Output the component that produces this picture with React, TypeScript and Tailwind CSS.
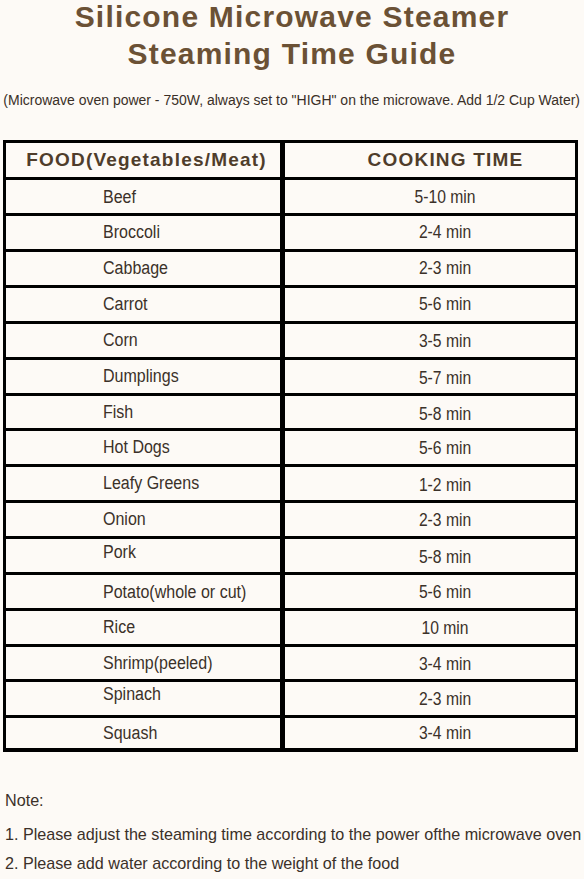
import React from "react";

const rows: [string, string, number, number][] = [
  ["Beef", "5-10 min", 1, 1],
  ["Broccoli", "2-4 min", 0, 0],
  ["Cabbage", "2-3 min", 0, 0],
  ["Carrot", "5-6 min", 0, 0],
  ["Corn", "3-5 min", 0, 1],
  ["Dumplings", "5-7 min", 0, 2],
  ["Fish", "5-8 min", 0, 2],
  ["Hot Dogs", "5-6 min", 0, 1],
  ["Leafy Greens", "1-2 min", 0, 2],
  ["Onion", "2-3 min", 0, 1],
  ["Pork", "5-8 min", -3, 2],
  ["Potato(whole or cut)", "5-6 min", 1, 1],
  ["Rice", "10 min", 0, 1],
  ["Shrimp(peeled)", "3-4 min", 0, 1],
  ["Spinach", "2-3 min", -4, 1],
  ["Squash", "3-4 min", 0, 0],
];

const sans = { fontFamily: '"Liberation Sans", Arial, sans-serif' };

export default function App() {
  return (
    <div className="w-[584px] h-[879px] overflow-hidden bg-[#fdfaf6]" style={sans}>
      <div className="text-center font-bold text-[30px] tracking-[1.2px] text-[#6b5135]">
        <div className="leading-[34px]">Silicone Microwave Steamer</div>
        <div className="leading-[39px]">Steaming Time Guide</div>
      </div>
      <div className="mt-[17px] flex justify-center text-[15.5px] leading-[20px] text-[#3a2f27]">
        <span className="inline-block shrink-0 whitespace-nowrap scale-x-[0.902] origin-center">
          (Microwave oven power - 750W, always set to "HIGH" on the microwave. Add 1/2 Cup Water)
        </span>
      </div>
      <div className="mt-[30px] ml-[3px] w-[575px] border-t-[3px] border-l-[3px] border-r-[3px] border-b-[4px] border-black">
        <div className="flex h-[37px] border-b-[3px] border-black font-bold text-[19px] tracking-[1.2px] text-[#4f3d2b]">
          <div className="w-[279px] border-r-[5px] border-black flex items-center justify-center pl-[7px]">
            FOOD(Vegetables/Meat)
          </div>
          <div className="flex-1 flex items-center justify-center pl-[31px]">COOKING TIME</div>
        </div>
        {rows.map(([food, time, o1, o2], i) => {
          const last = i === rows.length - 1;
          const short = i === 6 || i === 13;
          return (
            <div
              key={food}
              className={
                "flex text-[18px] text-[#3b3129] " +
                (last ? "h-[30px]" : short ? "h-[35px] border-b-[3px] border-black" : "h-[36px] border-b-[3px] border-black")
              }
            >
              <div className="w-[279px] border-r-[5px] border-black flex items-center pl-[97px]">
                <span
                  className="relative inline-block whitespace-nowrap scale-x-[0.89] origin-left"
                  style={{ top: o1 }}
                >
                  {food}
                </span>
              </div>
              <div className="flex-1 flex items-center justify-center pl-[31px]">
                <span
                  className="relative inline-block whitespace-nowrap scale-x-[0.87] origin-center"
                  style={{ top: o2 }}
                >
                  {time}
                </span>
              </div>
            </div>
          );
        })}
      </div>
      <div className="mt-[37px] pl-[5px] text-[17px] leading-[24px] text-[#3b3129]">
        <div>
          <span className="inline-block whitespace-nowrap scale-x-[0.95] origin-left">Note:</span>
        </div>
        <div className="mt-[10px]">
          <span className="inline-block whitespace-nowrap scale-x-[0.95] origin-left">
            1. Please adjust the steaming time according to the power ofthe microwave oven
          </span>
        </div>
        <div className="mt-[5px]">
          <span className="inline-block whitespace-nowrap scale-x-[0.95] origin-left">
            2. Please add water according to the weight of the food
          </span>
        </div>
      </div>
    </div>
  );
}
